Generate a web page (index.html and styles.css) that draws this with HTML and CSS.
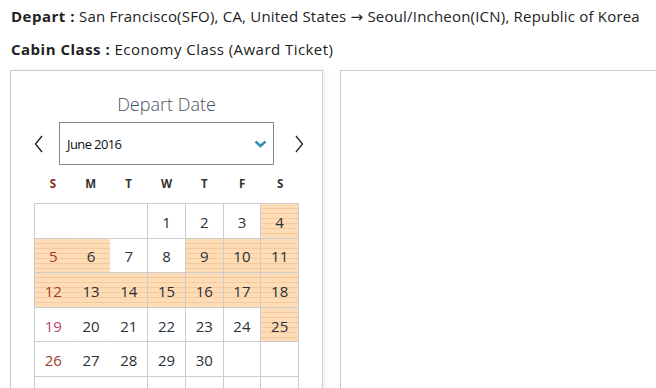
FILE: index.html
```html
<!DOCTYPE html>
<html>

<head>
    <title>Award Ticket</title>
    <meta charset="UTF-8">
    <link rel="stylesheet" href="styles.css">
</head>

<body>
    <div class="page">
        <p class="info"><b>Depart :</b> San Francisco(SFO), CA, United States &rarr; Seoul/Incheon(ICN), Republic of Korea</p>
        <p class="info wide"><b>Cabin Class :</b> Economy Class (Award Ticket)</p>

        <div class="panels">
            <div class="panel calendar">
                <h2 class="cal-title">Depart Date</h2>
                <div class="month-nav">
                    <span class="nav prev">
                        <svg width="9" height="18" viewBox="0 0 9 18"><path d="M8 1 L1.5 9 L8 17" fill="none" stroke="#222" stroke-width="1.3"/></svg>
                    </span>
                    <div class="month-select">
                        <span>June 2016</span>
                        <svg width="13" height="8" viewBox="0 0 13 8"><path d="M1.5 1.5 L6.5 6 L11.5 1.5" fill="none" stroke="#3a8fb5" stroke-width="2.6"/></svg>
                    </div>
                    <span class="nav next">
                        <svg width="9" height="18" viewBox="0 0 9 18"><path d="M1 1 L7.5 9 L1 17" fill="none" stroke="#222" stroke-width="1.3"/></svg>
                    </span>
                </div>

                <div class="weekdays">
                    <span class="sun">S</span><span>M</span><span>T</span><span>W</span><span>T</span><span>F</span><span>S</span>
                </div>

                <div class="days">
                    <span></span><span></span><span></span><span>1</span><span>2</span><span>3</span><span class="on">4</span>
                    <span class="on sun">5</span><span class="on">6</span><span>7</span><span>8</span><span class="on">9</span><span class="on">10</span><span class="on">11</span>
                    <span class="on sun">12</span><span class="on">13</span><span class="on">14</span><span class="on">15</span><span class="on">16</span><span class="on">17</span><span class="on">18</span>
                    <span class="sun pink">19</span><span>20</span><span>21</span><span>22</span><span>23</span><span>24</span><span class="on">25</span>
                    <span class="sun">26</span><span>27</span><span>28</span><span>29</span><span>30</span><span></span><span></span>
                    <span></span><span></span><span></span><span></span><span></span><span></span><span></span>
                </div>
            </div>
            <div class="panel results"></div>
        </div>
    </div>
</body>

</html>
```

FILE: styles.css
```css
* {
    margin: 0;
    padding: 0;
    box-sizing: border-box;
}

html, body {
    overflow: hidden;
}

body {
    font-family: "Open Sans", "DejaVu Sans", sans-serif;
    font-size: 14px;
    color: #222;
    background: #fff;
}

.page {
    padding: 4px 0 0 11px;
}

.info {
    font-size: 15px;
    letter-spacing: 0.2px;
    line-height: 24px;
    margin-bottom: 9px;
}

.info.wide {
    letter-spacing: 0.45px;
}

.info b {
    font-weight: 700;
    letter-spacing: 0.5px;
}

.panels {
    display: flex;
    gap: 17px;
    margin-left: -1px;
    width: 660px;
}

.panel {
    height: 340px;
    background: #fff;
    border: 1px solid #ccc;
}

.calendar {
    width: 313px;
    flex: none;
    box-shadow: 2px 0 6px rgba(0,0,0,0.07);
    padding-top: 21px;
}

.results {
    flex: 1;
    border-right: none;
}

.cal-title {
    font-size: 18px;
    font-weight: 300;
    line-height: 24px;
    text-align: center;
    color: #46505f;
    margin-bottom: 6px;
}

/* month selector */
.month-nav {
    display: flex;
    align-items: center;
    height: 43px;
}

.nav {
    width: 48px;
    display: flex;
    justify-content: center;
}

.prev {
    padding-left: 6px;
}

.next {
    padding-left: 2px;
}

.month-select {
    width: 215px;
    height: 43px;
    border: 1px solid #8a8a8a;
    display: flex;
    align-items: center;
    justify-content: space-between;
    padding: 0 6px 0 7px;
    font-size: 13px;
    letter-spacing: -0.6px;
    color: #111;
}

/* calendar grid */
.weekdays,
.days {
    width: 265px;
    margin: 0 auto;
    display: grid;
    grid-template-columns: repeat(7, 1fr);
}

.weekdays {
    height: 38px;
    align-items: center;
    text-align: center;
    font-size: 11.5px;
    font-weight: 700;
    color: #333;
    padding-bottom: 1px;
}

.weekdays .sun {
    color: #8b2a1c;
}

.days {
    border-top: 1px solid #ccc;
    border-left: 1px solid #ccc;
}

.days span {
    height: 34.6px;
    display: flex;
    align-items: center;
    justify-content: center;
    padding-top: 2px;
    font-size: 15px;
    color: #2b2f38;
    border-right: 1px solid #ccc;
    border-bottom: 1px solid #ccc;
}

.days span:nth-child(7n+1),
.days span:nth-child(7n+2) {
    border-right-color: transparent;
}

.days span.on {
    background: repeating-linear-gradient(to bottom, #fddcb6 0, #fddcb6 4px, #f4c99f 4px, #f4c99f 5px);
}

.days span.sun {
    color: #a23a2a;
}

.days span.pink {
    color: #b3456a;
}
```
